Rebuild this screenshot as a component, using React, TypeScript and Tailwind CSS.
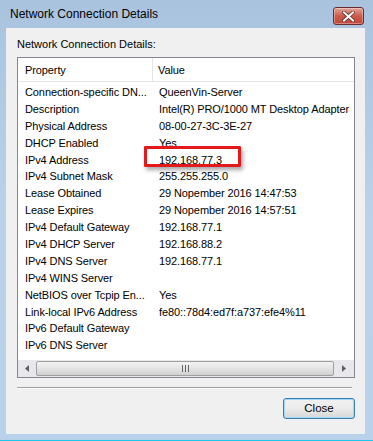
import React from "react";

type Row = { prop: string; value: string; highlight?: boolean };

const rows: Row[] = [
  { prop: "Connection-specific DN...", value: "QueenVin-Server" },
  { prop: "Description", value: "Intel(R) PRO/1000 MT Desktop Adapter" },
  { prop: "Physical Address", value: "08-00-27-3C-3E-27" },
  { prop: "DHCP Enabled", value: "Yes" },
  { prop: "IPv4 Address", value: "192.168.77.3", highlight: true },
  { prop: "IPv4 Subnet Mask", value: "255.255.255.0" },
  { prop: "Lease Obtained", value: "29 Nopember 2016 14:47:53" },
  { prop: "Lease Expires", value: "29 Nopember 2016 14:57:51" },
  { prop: "IPv4 Default Gateway", value: "192.168.77.1" },
  { prop: "IPv4 DHCP Server", value: "192.168.88.2" },
  { prop: "IPv4 DNS Server", value: "192.168.77.1" },
  { prop: "IPv4 WINS Server", value: "" },
  { prop: "NetBIOS over Tcpip En...", value: "Yes" },
  { prop: "Link-local IPv6 Address", value: "fe80::78d4:ed7f:a737:efe4%11" },
  { prop: "IPv6 Default Gateway", value: "" },
  { prop: "IPv6 DNS Server", value: "" },
];

const font = { fontFamily: '"Segoe UI", "Liberation Sans", Arial, sans-serif' };

export default function App() {
  return (
    <div
      className="flex h-[441px] w-[373px] flex-col border-b border-[#1ec6ea] bg-gradient-to-b from-[#a9c3df] via-[#bcd2ea] to-[#b9d1ea] text-[11px] text-black"
      style={font}
    >
      {/* title bar */}
      <div className="flex h-[28px] items-center justify-between pl-[10px] pr-[9px]">
        <span className="text-[12px]">Network Connection Details</span>
        <div className="mt-[4px] flex h-[18px] w-[31px] items-center justify-center rounded-[3px] border border-[#6b2b2b] bg-gradient-to-b from-[#e0a597] via-[#cc5a4a] to-[#c2463a] shadow-[inset_0_0_0_1px_rgba(255,255,255,0.35)]">
          <svg width="13" height="11" viewBox="0 0 13 11">
            <path
              d="M2 1.5 L11 9.5 M11 1.5 L2 9.5"
              stroke="#5a2a2a"
              strokeWidth="3.6"
              strokeLinecap="square"
            />
            <path
              d="M2 1.5 L11 9.5 M11 1.5 L2 9.5"
              stroke="#ffffff"
              strokeWidth="2"
              strokeLinecap="square"
            />
          </svg>
        </div>
      </div>

      {/* client area */}
      <div className="mb-[6px] ml-[6px] mr-[8px] flex flex-1 flex-col bg-[#f0f0f0] pl-[11px] pr-[10px]">
        <div className="pt-[9px] pb-[5px] leading-[15px]">Network Connection Details:</div>

        {/* list view */}
        <div className="flex h-[321px] flex-col border border-[#828790] bg-white tracking-[-0.1px]">
          <div className="flex h-[24px] shrink-0 border-b border-[#e5e5e5]">
            <div className="flex w-[135px] shrink-0 items-center border-r border-[#e5e5e5] pl-[7px] pt-[1px]">
              Property
            </div>
            <div className="flex min-w-0 flex-1 items-center pl-[5px] pt-[1px]">Value</div>
          </div>
          <div className="flex flex-1 flex-col pt-[2px]">
            {rows.map((r) => (
              <div key={r.prop} className="flex h-[16.9px] items-center leading-[15px]">
                <div className="w-[135px] shrink-0 whitespace-nowrap pl-[7px]">{r.prop}</div>
                <div className="relative min-w-0 flex-1 whitespace-nowrap pl-[6px]">
                  {r.value}
                  {r.highlight && (
                    <span className="absolute left-[-9px] top-[-7px] h-[21px] w-[97px] rounded-[1px] border-[3px] border-[#e3191b] shadow-[2px_3px_4px_rgba(0,0,0,0.35)]" />
                  )}
                </div>
              </div>
            ))}
          </div>
          {/* horizontal scroll bar */}
          <div className="flex h-[17px] shrink-0 items-center bg-[#e8e8ec]">
            <div className="flex w-[18px] items-center justify-center">
              <svg width="4" height="7" viewBox="0 0 4 7">
                <path d="M4 0 L0 3.5 L4 7 Z" fill="#606060" />
              </svg>
            </div>
            <div className="flex h-[15px] flex-1 items-center justify-center rounded-[2px] border border-[#a0a0a0] bg-gradient-to-b from-[#f3f3f3] via-[#e4e4e4] to-[#d0d0d0]">
              <svg width="7" height="7" viewBox="0 0 7 7">
                <path d="M0.5 0 V7 M3.5 0 V7 M6.5 0 V7" stroke="#666" strokeWidth="1" />
              </svg>
            </div>
            <div className="flex w-[20px] items-center justify-center">
              <svg width="4" height="7" viewBox="0 0 4 7">
                <path d="M0 0 L4 3.5 L0 7 Z" fill="#606060" />
              </svg>
            </div>
          </div>
        </div>

        {/* separator */}
        <div className="mt-[9px] mr-[3px] border-t border-[#a0a0a0] border-b border-b-white" />

        <div className="mt-[9px] flex justify-end">
          <button className="flex h-[21px] w-[72px] items-center justify-center rounded-[3px] border border-[#3c7fb1] bg-gradient-to-b from-[#f2f2f2] via-[#ebebeb] to-[#d6d6d6] text-[11.5px] leading-none shadow-[inset_0_0_0_1px_#9fd8f7]">
            Close
          </button>
        </div>
      </div>
    </div>
  );
}
